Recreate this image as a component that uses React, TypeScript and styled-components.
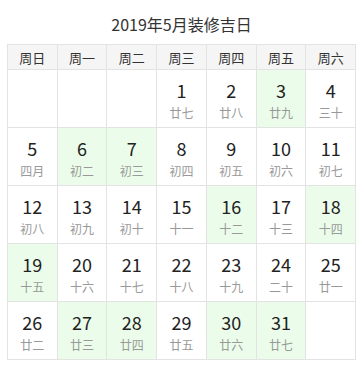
import React from "react";
import styled, { createGlobalStyle } from "styled-components";

const Global = createGlobalStyle`
  html, body { margin: 0; padding: 0; background: #fff; }
  body { font-family: "Noto Sans CJK SC", "Noto Sans", sans-serif; color: #333; }
`;

const Page = styled.div`
  width: 349px;
  padding: 12px 0 0 7px;
`;

const Title = styled.h3`
  margin: 0 0 8px;
  height: 24px;
  line-height: 24px;
  font-size: 16px;
  font-weight: normal;
  text-align: center;
  color: #333;
`;

const Grid = styled.div`
  display: grid;
  grid-template-columns: repeat(7, 1fr);
  grid-template-rows: 25px repeat(5, 58px);
  border-left: 1px solid #e3e3e3;
  border-top: 1px solid #e3e3e3;
`;

const Head = styled.div`
  background: #f5f5f5;
  border-right: 1px solid #e3e3e3;
  border-bottom: 1px solid #e3e3e3;
  display: flex;
  align-items: center;
  justify-content: center;
  font-size: 13px;
  color: #333;
`;

const Cell = styled.div<{ $good?: boolean }>`
  background: ${(p) => (p.$good ? "#ebfdea" : "#fff")};
  border-right: 1px solid #e3e3e3;
  border-bottom: 1px solid #e3e3e3;
  display: flex;
  flex-direction: column;
  align-items: center;
  padding-top: 8px;
`;

const Num = styled.div`
  font-size: 18px;
  line-height: 24px;
  color: #222;
`;

const Lunar = styled.div`
  font-size: 12px;
  line-height: 22px;
  color: #999;
`;

const heads = ["周日", "周一", "周二", "周三", "周四", "周五", "周六"];
const lunar = [
  "廿七", "廿八", "廿九", "三十", "四月", "初二", "初三", "初四", "初五", "初六", "初七",
  "初八", "初九", "初十", "十一", "十二", "十三", "十四", "十五", "十六", "十七", "十八",
  "十九", "二十", "廿一", "廿二", "廿三", "廿四", "廿五", "廿六", "廿七",
];
const good = new Set([3, 6, 7, 16, 18, 19, 27, 28, 30, 31]);

export default function App() {
  const cells: React.ReactNode[] = [];
  for (let i = 0; i < 35; i++) {
    const d = i - 2;
    if (d < 1 || d > 31) {
      cells.push(<Cell key={i} />);
    } else {
      cells.push(
        <Cell key={i} $good={good.has(d)}>
          <Num>{d}</Num>
          <Lunar>{lunar[d - 1]}</Lunar>
        </Cell>
      );
    }
  }
  return (
    <>
      <Global />
      <Page>
        <Title>2019年5月装修吉日</Title>
        <Grid>
          {heads.map((h) => (
            <Head key={h}>{h}</Head>
          ))}
          {cells}
        </Grid>
      </Page>
    </>
  );
}
